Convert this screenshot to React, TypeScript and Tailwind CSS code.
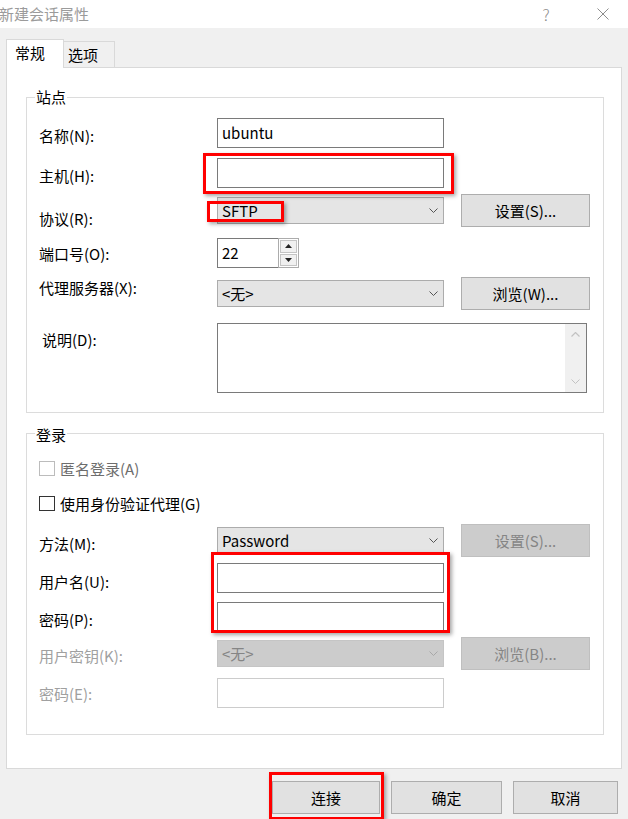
import React from "react";

const Chevron = ({ color = "#555555" }: { color?: string }) => (
  <svg width="9" height="5" viewBox="0 0 9 5" className="shrink-0">
    <path d="M0.5 0.5 L4.5 4.5 L8.5 0.5" fill="none" stroke={color} strokeWidth="1" />
  </svg>
);

const ChevronUp = ({ color = "#c2c2c2" }: { color?: string }) => (
  <svg width="9" height="5" viewBox="0 0 9 5" className="shrink-0">
    <path d="M0.5 4.5 L4.5 0.5 L8.5 4.5" fill="none" stroke={color} strokeWidth="1.2" />
  </svg>
);

const Input = ({ value = "", disabled = false }: { value?: string; disabled?: boolean }) => (
  <div
    className={`h-[30px] w-[227px] bg-white flex items-center pl-[4px] border ${
      disabled ? "border-[#cccccc]" : "border-[#7a7a7a]"
    }`}
  >
    {value}
  </div>
);

const Select = ({ value, disabled = false }: { value: string; disabled?: boolean }) => (
  <div
    className={`h-[27px] w-[227px] flex items-center justify-between pl-[4px] pr-[5px] border ${
      disabled ? "border-[#c5c5c5] bg-[#cccccc] text-[#858585]" : "border-[#acacac] bg-[#e5e5e5]"
    }`}
  >
    <span>{value}</span>
    <Chevron color={disabled ? "#a8a8a8" : "#555555"} />
  </div>
);

const Btn = ({ label, disabled = false }: { label: string; disabled?: boolean }) => (
  <div
    className={`h-[33px] w-[129px] flex items-center justify-center border ${
      disabled ? "border-[#bfbfbf] bg-[#cccccc] text-[#858585]" : "border-[#adadad] bg-[#e1e1e1]"
    }`}
  >
    {label}
  </div>
);

const Row = ({
  label,
  mt,
  h,
  labelMt,
  labelClass = "",
  children,
}: {
  label: string;
  mt: string;
  h: string;
  labelMt: string;
  labelClass?: string;
  children: React.ReactNode;
}) => (
  <div className={`flex items-start ${mt} ${h}`}>
    <div className={`w-[178px] shrink-0 whitespace-nowrap ${labelMt} ${labelClass}`}>{label}</div>
    <div className="flex items-center gap-[17px] h-full">{children}</div>
  </div>
);

const Checkbox = ({ label, disabled = false, mt }: { label: string; disabled?: boolean; mt: string }) => (
  <div className={`flex items-start h-[20px] ${mt}`}>
    <div
      className={`mt-[2px] h-[15px] w-[16px] bg-white border ${
        disabled ? "border-[#bcbcbc]" : "border-[#333333]"
      }`}
    />
    <span className={`ml-[5px] ${disabled ? "text-[#6d6d6d]" : ""}`}>{label}</span>
  </div>
);

const RedBox = ({ cls }: { cls: string }) => (
  <div
    className={`absolute border-[3px] border-[#ff0000] shadow-[2px_2px_4px_rgba(0,0,0,0.35)] pointer-events-none ${cls}`}
  />
);

export default function App() {
  return (
    <div className="relative w-[628px] h-[819px] overflow-hidden bg-[#f0f0f0] text-[15px] leading-[20px] text-black font-['Noto_Sans_CJK_SC','Noto_Sans',sans-serif]">
      {/* Title bar */}
      <div className="h-[28px] bg-white flex items-center">
        <span className="text-[#9b9b9b] -ml-[1px]">新建会话属性</span>
        <span className="ml-auto w-[8px] text-center text-[16px] leading-none font-light text-[#8d8d8d]">?</span>
        <svg width="12" height="12" viewBox="0 0 12 12" className="ml-[47px] mr-[19px]">
          <path d="M0.5 0.5 L11.5 11.5 M11.5 0.5 L0.5 11.5" stroke="#8d8d8d" strokeWidth="1" fill="none" />
        </svg>
      </div>

      {/* Tabs */}
      <div className="mt-[11px] flex items-end pl-[6px] relative z-10">
        <div className="h-[29px] w-[58px] bg-white border border-b-0 border-[#d9d9d9] -mb-[1px] pl-[8px] pb-[2px] flex items-center">
          常规
        </div>
        <div className="h-[26px] w-[51px] border border-l-0 border-b-0 border-[#d9d9d9] pl-[4px] flex items-center">
          选项
        </div>
      </div>

      {/* Panel */}
      <div className="mx-[6px] h-[702px] border border-[#d9d9d9] bg-white pt-[29px]">
        {/* 站点 */}
        <div className="relative ml-[19px] w-[578px] border border-[#dcdcdc] pl-[12px] pt-[20px] pb-[19px]">
          <span className="absolute -top-[11px] left-[8px] bg-white px-[1px]">站点</span>
          <Row label="名称(N):" mt="mt-0" h="h-[30px]" labelMt="mt-[8px]">
            <Input value="ubuntu" />
          </Row>
          <Row label="主机(H):" mt="mt-[10px]" h="h-[30px]" labelMt="mt-[8px]">
            <Input />
          </Row>
          <Row label="协议(R):" mt="mt-[6px]" h="h-[33px]" labelMt="mt-[15px]">
            <Select value="SFTP" />
            <Btn label="设置(S)..." />
          </Row>
          <Row label="端口号(O):" mt="mt-[11px]" h="h-[30px]" labelMt="mt-[6px]">
            <div className="flex h-[30px]">
              <div className="h-[30px] w-[62px] border border-[#7a7a7a] bg-white flex items-center pl-[4px]">22</div>
              <div className="flex flex-col w-[21px] h-[30px] -ml-[1px] border border-[#acacac] bg-white p-[1px] gap-[1px]">
                <div className="flex-1 bg-[#f0f0f0] border border-[#c4c4c4] flex items-center justify-center">
                  <svg width="7" height="4" viewBox="0 0 7 4">
                    <path d="M3.5 0 L7 4 L0 4 Z" fill="#222222" />
                  </svg>
                </div>
                <div className="flex-1 bg-[#f0f0f0] border border-[#c4c4c4] flex items-center justify-center">
                  <svg width="7" height="4" viewBox="0 0 7 4">
                    <path d="M0 0 L7 0 L3.5 4 Z" fill="#222222" />
                  </svg>
                </div>
              </div>
            </div>
          </Row>
          <Row label="代理服务器(X):" mt="mt-[9px]" h="h-[33px]" labelMt="mt-[1px]">
            <Select value="<无>" />
            <Btn label="浏览(W)..." />
          </Row>
          <Row label="说明(D):" mt="mt-[13px]" h="h-[70px]" labelMt="mt-[7px]" labelClass="pl-[3px]">
            <div className="h-[70px] w-[370px] border border-[#7a7a7a] bg-white flex justify-end">
              <div className="w-[21px] h-full bg-[#f0f0f0] flex flex-col items-center justify-between py-[8px]">
                <ChevronUp />
                <Chevron color="#c2c2c2" />
              </div>
            </div>
          </Row>
        </div>

        {/* 登录 */}
        <div className="relative mt-[20px] ml-[19px] w-[578px] border border-[#dcdcdc] pl-[12px] pt-[25px] pb-[26px]">
          <span className="absolute -top-[9px] left-[8px] bg-white px-[1px]">登录</span>
          <Checkbox label="匿名登录(A)" disabled mt="mt-0" />
          <Checkbox label="使用身份验证代理(G)" mt="mt-[15px]" />
          <Row label="方法(M):" mt="mt-[10px]" h="h-[33px]" labelMt="mt-[10px]">
            <Select value="Password" />
            <Btn label="设置(S)..." disabled />
          </Row>
          <Row label="用户名(U):" mt="mt-[6px]" h="h-[30px]" labelMt="mt-[9px]">
            <Input />
          </Row>
          <Row label="密码(P):" mt="mt-[9px]" h="h-[30px]" labelMt="mt-[8px]">
            <Input />
          </Row>
          <Row label="用户密钥(K):" mt="mt-[5px]" h="h-[33px]" labelMt="mt-[9px]" labelClass="text-[#a0a0a0]">
            <Select value="<无>" disabled />
            <Btn label="浏览(B)..." disabled />
          </Row>
          <Row label="密码(E):" mt="mt-[8px]" h="h-[30px]" labelMt="mt-[6px]" labelClass="text-[#a0a0a0]">
            <Input disabled />
          </Row>
        </div>
      </div>

      {/* Bottom buttons */}
      <div className="mt-[12px] flex pl-[272px] gap-[11px]">
        <div className="h-[33px] w-[108px] border border-[#adadad] bg-[#e1e1e1] flex items-center justify-center">连接</div>
        <div className="h-[33px] w-[111px] border border-[#adadad] bg-[#e1e1e1] flex items-center justify-center">确定</div>
        <div className="h-[33px] w-[105px] border border-[#adadad] bg-[#e1e1e1] flex items-center justify-center">取消</div>
      </div>

      {/* Red annotation boxes */}
      <RedBox cls="left-[203px] top-[153px] w-[251px] h-[41px]" />
      <RedBox cls="left-[207px] top-[201px] w-[77px] h-[21px]" />
      <RedBox cls="left-[211px] top-[552px] w-[239px] h-[81px]" />
      <RedBox cls="left-[269px] top-[772px] w-[115px] h-[48px]" />
    </div>
  );
}
